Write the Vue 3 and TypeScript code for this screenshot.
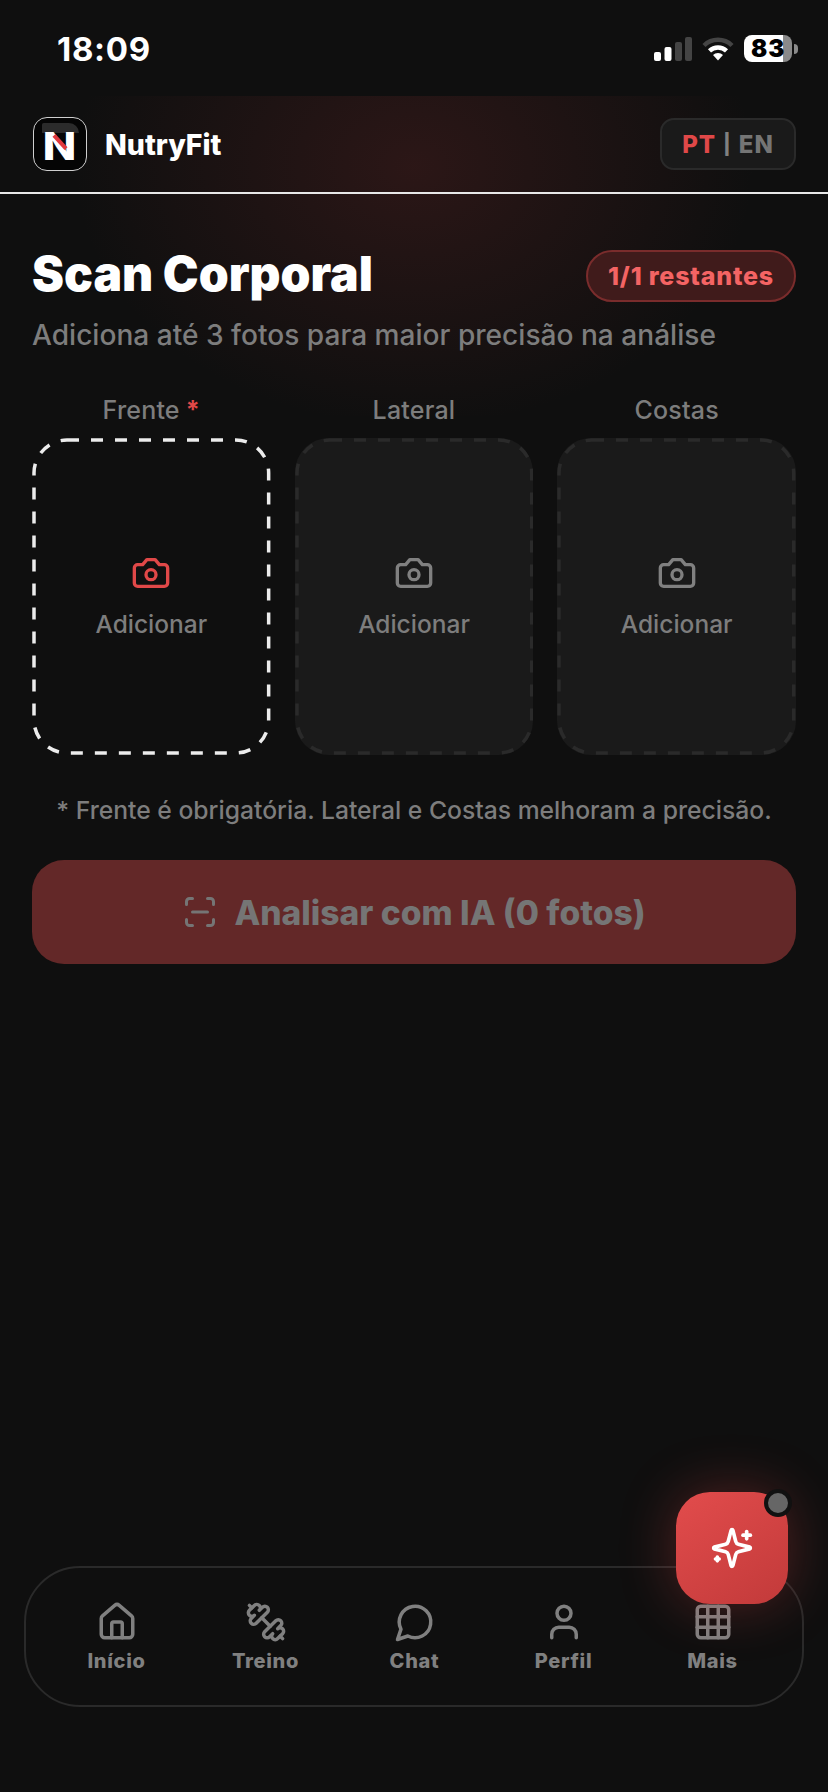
<template>
  <div class="page">
    <div class="glow"></div>

    <div class="status">
      <span class="time">18:09</span>
      <div class="status-right">
        <svg class="signal" width="38" height="24" viewBox="0 0 38 24">
          <rect x="0" y="15" width="7" height="9" rx="2" fill="#fff" />
          <rect x="10.500" y="10" width="7" height="14" rx="2" fill="#fff" />
          <rect x="21" y="5" width="7" height="19" rx="2" fill="#444" />
          <rect x="31" y="0" width="7" height="24" rx="2" fill="#444" />
        </svg>
        <svg class="wifi" width="32" height="25" viewBox="0 0 32 25" fill="none">
          <path d="M2 9.500a20 20 0 0 1 28 0" stroke="#444" stroke-width="4.500" />
          <path d="M7.500 14.800a12.500 12.500 0 0 1 17 0" stroke="#fff" stroke-width="4.500" />
          <path d="M11 19a7 7 0 0 1 10 0l-5 5.500z" fill="#fff" />
        </svg>
        <div class="battery"><span>83</span></div>
        <div class="battery-tip"></div>
      </div>
    </div>

    <header class="header">
      <div class="brand">
        <div class="logo">
          <div class="logo-shine"></div>
          <span class="logo-n">N</span>
          <div class="logo-cut"></div>
        </div>
        <span class="brand-name">NutryFit</span>
      </div>
      <div class="lang">
        <span class="lang-on">PT</span>
        <span class="lang-sep">|</span>
        <span>EN</span>
      </div>
    </header>

    <main class="content">
      <div class="title-row">
        <h1>Scan Corporal</h1>
        <div class="quota">1/1 restantes</div>
      </div>
      <p class="sub">Adiciona até 3 fotos para maior precisão na análise</p>

      <div class="slots">
        <div v-for="slot in slots" :key="slot.label" class="slot">
          <div class="slot-label">
            {{ slot.label }}<span v-if="slot.required" class="req"> *</span>
          </div>
          <div class="card" :class="{ active: slot.required }">
            <svg class="dash" viewBox="0 0 238.670 317" fill="none">
              <rect x="2" y="2" width="234.670" height="313" rx="33" stroke-dasharray="12 12" />
            </svg>
            <svg class="cam" width="40" height="40" viewBox="0 0 24 24" fill="none" stroke="currentColor" stroke-width="2" stroke-linecap="round" stroke-linejoin="round">
              <path d="M14.500 4h-5L7 7H4a2 2 0 0 0-2 2v9a2 2 0 0 0 2 2h16a2 2 0 0 0 2-2V9a2 2 0 0 0-2-2h-3l-2.500-3z" />
              <circle cx="12" cy="13" r="3" />
            </svg>
            <span class="add">Adicionar</span>
          </div>
        </div>
      </div>

      <p class="note">* Frente é obrigatória. Lateral e Costas melhoram a precisão.</p>

      <button class="analyse" type="button">
        <svg width="36" height="36" viewBox="0 0 24 24" fill="none" stroke="currentColor" stroke-width="2" stroke-linecap="round" stroke-linejoin="round">
          <path d="M3 7V5a2 2 0 0 1 2-2h2" />
          <path d="M17 3h2a2 2 0 0 1 2 2v2" />
          <path d="M21 17v2a2 2 0 0 1-2 2h-2" />
          <path d="M7 21H5a2 2 0 0 1-2-2v-2" />
          <path d="M7 12h10" />
        </svg>
        <span>Analisar com IA (0 fotos)</span>
      </button>
    </main>

    <nav class="nav">
      <div v-for="item in nav" :key="item.label" class="nav-item">
        <svg width="42" height="42" viewBox="0 0 24 24" fill="none" stroke="currentColor" stroke-width="2" stroke-linecap="round" stroke-linejoin="round">
          <path v-for="d in item.paths" :key="d" :d="d" />
          <circle v-if="item.circle" cx="12" cy="7" r="4" />
        </svg>
        <span>{{ item.label }}</span>
      </div>
    </nav>

    <div class="fab">
      <svg width="44" height="44" viewBox="0 0 24 24" fill="none" stroke="#fff" stroke-width="2" stroke-linecap="round" stroke-linejoin="round">
        <path d="M9.937 15.500A2 2 0 0 0 8.500 14.063l-6.135-1.582a.5.5 0 0 1 0-.962L8.500 9.936A2 2 0 0 0 9.937 8.500l1.582-6.135a.5.5 0 0 1 .963 0L14.063 8.500A2 2 0 0 0 15.500 9.937l6.135 1.581a.5.5 0 0 1 0 .964L15.500 14.063a2 2 0 0 0-1.437 1.437l-1.582 6.135a.5.5 0 0 1-.963 0z" />
        <path d="M20 3v4" />
        <path d="M22 5h-4" />
        <path d="M4 17v2" />
        <path d="M5 18H3" />
      </svg>
      <div class="fab-dot"></div>
    </div>
  </div>
</template>

<script setup lang="ts">
  const slots = [
    { label: "Frente", required: true },
    { label: "Lateral", required: false },
    { label: "Costas", required: false }
  ];

  const nav = [
    {
      label: "Início",
      paths: [
        "M15 21v-8a1 1 0 0 0-1-1h-4a1 1 0 0 0-1 1v8",
        "M3 10a2 2 0 0 1 .709-1.528l7-5.999a2 2 0 0 1 2.582 0l7 5.999A2 2 0 0 1 21 10v9a2 2 0 0 1-2 2H5a2 2 0 0 1-2-2z"
      ]
    },
    {
      label: "Treino",
      paths: [
        "M14.400 14.400 9.600 9.600",
        "M18.657 21.485a2 2 0 1 1-2.829-2.828l-1.767 1.768a2 2 0 1 1-2.829-2.829l6.364-6.364a2 2 0 1 1 2.829 2.829l-1.768 1.767a2 2 0 1 1 2.828 2.829z",
        "m21.500 21.500-1.400-1.400",
        "M3.900 3.900 2.500 2.500",
        "M6.404 12.768a2 2 0 1 1-2.829-2.829l1.768-1.767a2 2 0 1 1-2.828-2.829l2.828-2.828a2 2 0 1 1 2.829 2.828l1.767-1.768a2 2 0 1 1 2.829 2.829z"
      ]
    },
    { label: "Chat", paths: ["M7.900 20A9 9 0 1 0 4 16.100L2 22Z"] },
    {
      label: "Perfil",
      paths: ["M19 21v-2a4 4 0 0 0-4-4H9a4 4 0 0 0-4 4v2"],
      circle: true
    },
    {
      label: "Mais",
      paths: [
        "M5 3h14a2 2 0 0 1 2 2v14a2 2 0 0 1-2 2H5a2 2 0 0 1-2-2V5a2 2 0 0 1 2-2z",
        "M3 9h18",
        "M3 15h18",
        "M9 3v18",
        "M15 3v18"
      ]
    }
  ];
</script>

<style>
  html, body {
    margin: 0;
    background: #0f0f0f;
  }
</style>

<style scoped>
  .page {
    width: 828px;
    height: 1792px;
    position: relative;
    overflow: hidden;
    background: #0f0f0f;
    font-family: Inter, "Liberation Sans", sans-serif;
    color: #fff;
  }

  .glow {
    position: absolute;
    left: 0;
    top: 96px;
    width: 828px;
    height: 320px;
    background: radial-gradient(ellipse 340px 260px at 50% 70px, rgba(110, 40, 40, .3), rgba(110, 40, 40, 0) 100%);
  }

  .status {
    height: 96px;
    box-sizing: border-box;
    padding: 1px 30px 0 57px;
    display: flex;
    align-items: center;
    justify-content: space-between;
    position: relative;
  }

  .time {
    font-size: 33px;
    font-weight: 700;
    letter-spacing: .7px;
  }

  .status-right {
    display: flex;
    align-items: center;
  }

  .signal {
    margin-right: 10px;
  }

  .wifi {
    margin-right: 10px;
  }

  .battery {
    width: 48px;
    height: 27px;
    border-radius: 8px;
    background: linear-gradient(90deg, #fff 81%, #8a8a8a 81%);
    display: flex;
    align-items: center;
    padding-left: 7px;
    box-sizing: border-box;
    color: #000;
    font-size: 24px;
    font-weight: 900;
    letter-spacing: 1px;
  }

  .battery-tip {
    width: 4px;
    height: 10px;
    margin-left: 2px;
    border-radius: 0 4px 4px 0;
    background: #8a8a8a;
  }

  .header {
    height: 98px;
    box-sizing: border-box;
    border-bottom: 2px solid #e8e8e8;
    padding: 0 32px 0 33px;
    display: flex;
    align-items: center;
    justify-content: space-between;
    position: relative;
  }

  .brand {
    display: flex;
    align-items: center;
    gap: 18px;
  }

  .logo {
    width: 54px;
    height: 54px;
    box-sizing: border-box;
    border: 1px solid #cfcfcf;
    border-radius: 14px;
    background: #050505;
    position: relative;
    display: flex;
    align-items: center;
    justify-content: center;
    overflow: hidden;
  }

  .logo-shine {
    position: absolute;
    left: 8px;
    top: 5px;
    width: 37px;
    height: 10px;
    border-radius: 2px 12px 0 0;
    background: #2b2b2b;
  }

  .logo-n {
    position: relative;
    margin-top: 4px;
    font-size: 38px;
    line-height: 1;
    font-weight: 800;
    color: #fff;
    transform: scaleX(1.15);
  }

  .logo-cut {
    position: absolute;
    left: 17px;
    top: 22px;
    width: 18px;
    height: 4px;
    background: #e0393e;
    transform: rotate(48deg);
  }

  .brand-name {
    font-size: 28.500px;
    font-weight: 800;
  }

  .lang {
    width: 136px;
    height: 52px;
    box-sizing: border-box;
    border: 2px solid #2a2a2a;
    border-radius: 14px;
    background: #1a1a1a;
    display: flex;
    align-items: center;
    justify-content: center;
    gap: 7px;
    font-size: 24px;
    font-weight: 800;
    letter-spacing: 1px;
    color: #757575;
  }

  .lang-on {
    color: #e04848;
  }

  .lang-sep {
    font-size: 20px;
    font-weight: 800;
    color: #808080;
  }

  .content {
    padding: 0 32px;
    position: relative;
  }

  .title-row {
    margin-top: 55px;
    height: 54px;
    display: flex;
    align-items: center;
    justify-content: space-between;
  }

  h1 {
    margin: 0 0 6px;
    font-size: 48px;
    font-weight: 900;
    letter-spacing: 0;
    color: #fff;
  }

  .quota {
    width: 210px;
    height: 52px;
    box-sizing: border-box;
    border: 2px solid #7a2c2c;
    border-radius: 26px;
    background: #401b1b;
    color: #f46464;
    display: flex;
    align-items: center;
    justify-content: center;
    font-size: 25px;
    font-weight: 800;
    letter-spacing: .8px;
  }

  .sub {
    margin: 15px 0 0;
    font-size: 28.100px;
    line-height: 34px;
    font-weight: 500;
    color: #7d7d7d;
  }

  .slots {
    margin-top: 43px;
    display: grid;
    grid-template-columns: repeat(3, 1fr);
    gap: 24px;
  }

  .slot-label {
    height: 30px;
    line-height: 30px;
    margin-bottom: 13px;
    text-align: center;
    font-size: 25px;
    font-weight: 500;
    letter-spacing: .2px;
    color: #7d7d7d;
  }

  .req {
    color: #e04848;
    font-weight: 700;
  }

  .card {
    height: 317px;
    position: relative;
    box-sizing: border-box;
    border-radius: 34px;
    background: #1a1a1a;
    color: #808080;
    display: flex;
    flex-direction: column;
    align-items: center;
    padding-top: 115px;
  }

  .card.active {
    background: transparent;
    color: #e04848;
  }

  .dash {
    position: absolute;
    inset: 0;
    width: 100%;
    height: 100%;
  }

  .dash rect {
    stroke: #2a2a2a;
    stroke-width: 3.500;
  }

  .card.active .dash rect {
    stroke: #ececec;
  }

  .add {
    margin-top: 14px;
    font-size: 24.500px;
    line-height: 34px;
    font-weight: 500;
    color: #7d7d7d;
  }

  .note {
    margin: 38px 0 0;
    text-align: center;
    font-size: 24.700px;
    line-height: 34px;
    font-weight: 500;
    white-space: nowrap;
    color: #7d7d7d;
  }

  .analyse {
    margin-top: 33px;
    width: 100%;
    height: 104px;
    border: none;
    border-radius: 32px;
    background: #632828;
    color: #757575;
    display: flex;
    align-items: center;
    justify-content: center;
    gap: 16px;
    font-family: inherit;
    font-size: 33.600px;
    font-weight: 800;
  }

  .nav {
    position: absolute;
    left: 24px;
    top: 1566px;
    width: 780px;
    height: 141px;
    box-sizing: border-box;
    border: 2px solid #2a2a2a;
    border-radius: 56px;
    background: #0f0f0f;
    padding: 0 15px 0 16px;
    display: grid;
    grid-template-columns: repeat(5, 1fr);
  }

  .nav-item {
    display: flex;
    flex-direction: column;
    align-items: center;
    padding-top: 33px;
    color: #808080;
    font-size: 20px;
    font-weight: 800;
    letter-spacing: .7px;
  }

  .nav-item span {
    line-height: 26px;
    margin-top: 5px;
  }

  .fab {
    position: absolute;
    left: 676px;
    top: 1492px;
    width: 112px;
    height: 112px;
    border-radius: 34px;
    background: linear-gradient(145deg, #e24c4c, #c23a3a);
    box-shadow: 0 0 56px rgba(224, 72, 72, .32);
    display: flex;
    align-items: center;
    justify-content: center;
  }

  .fab-dot {
    position: absolute;
    left: 88px;
    top: -3px;
    width: 20px;
    height: 20px;
    border: 4px solid #111;
    box-sizing: content-box;
    border-radius: 50%;
    background: #666;
  }
</style>
